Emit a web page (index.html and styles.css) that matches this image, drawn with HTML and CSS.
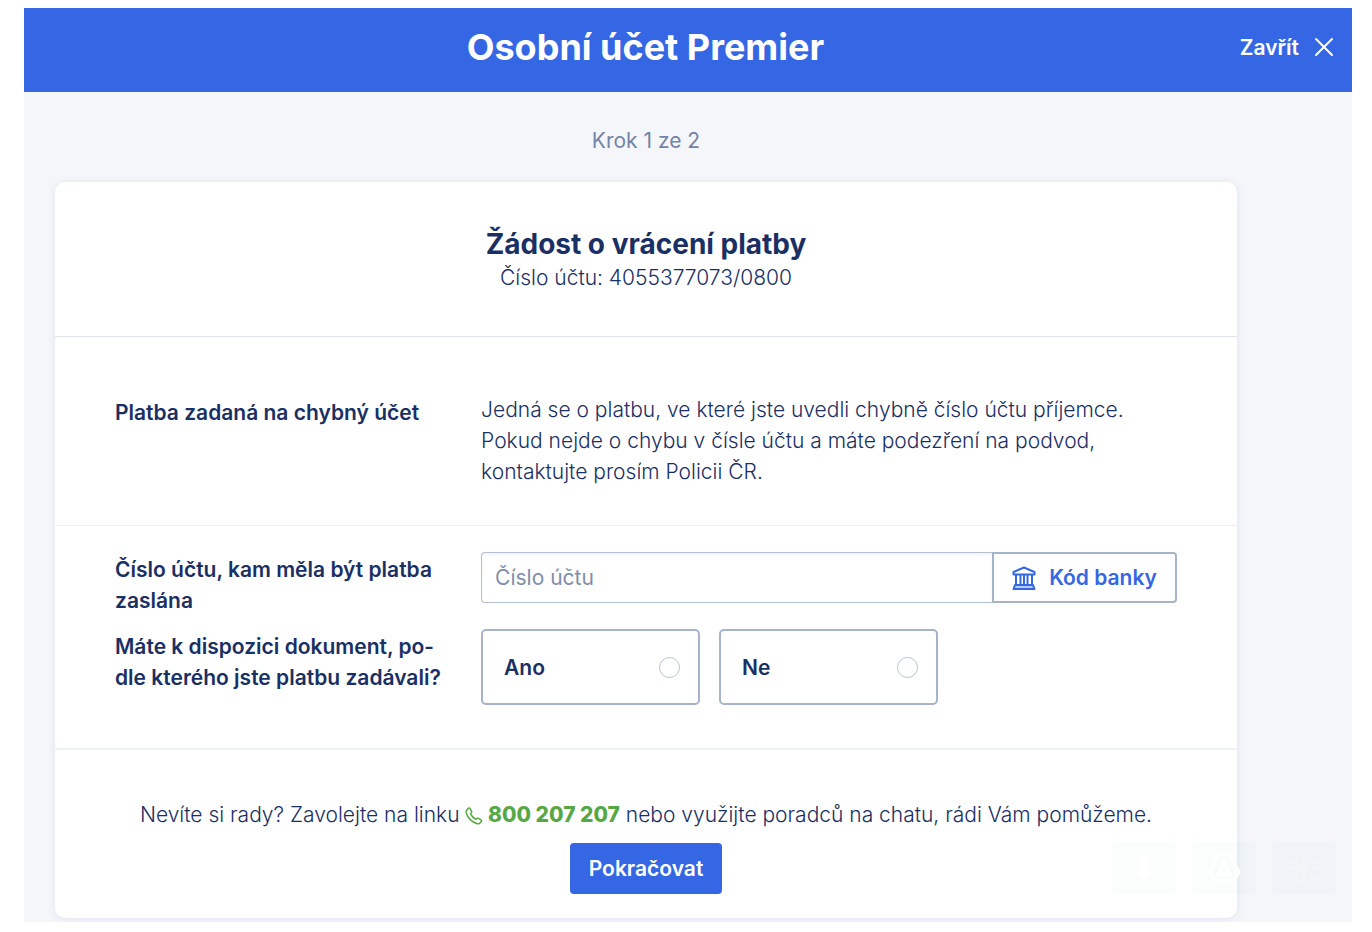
FILE: index.html
```html
<!DOCTYPE html>
<html lang="cs">
<head>
    <meta charset="utf-8">
    <title>Osobní účet Premier</title>
    <link rel="stylesheet" href="styles.css">
</head>
<body>
    <div class="page">
        <header class="header">
            <h1>Osobní účet Premier</h1>
            <button type="button" class="close">
                Zavřít
                <svg width="20" height="20" viewBox="0 0 20 20" fill="none" stroke="currentColor" stroke-width="2" stroke-linecap="round"><path d="M2 2l16 16M18 2L2 18"/></svg>
            </button>
        </header>
        <main class="content">
            <p class="step">Krok 1 ze 2</p>
            <form class="card">
                <div class="card-head">
                    <h2>Žádost o vrácení platby</h2>
                    <p>Číslo účtu: 4055377073/0800</p>
                </div>
                <div class="row intro">
                    <h3 class="label">Platba zadaná na chybný účet</h3>
                    <p>Jedná se o platbu, ve které jste uvedli chybně číslo účtu příjemce. Pokud nejde o chybu v čísle účtu a máte podezření na podvod, kontaktujte prosím Policii ČR.</p>
                </div>
                <div class="fields">
                    <div class="row">
                        <label class="label" for="ucet">Číslo účtu, kam měla být platba zaslána</label>
                        <div class="account">
                            <input type="text" id="ucet" name="ucet" placeholder="Číslo účtu">
                            <button type="button" class="bank">
                                <svg width="24" height="24" viewBox="0 0 24 24" fill="none" stroke="currentColor" stroke-width="2" stroke-linejoin="round"><path d="M1.500 8.500V6L12 1.500 22.500 6v2.500zM4 9v10M8.500 9v10M12 9v10M15.500 9v10M20 9v10"/><path d="M3 19h18l1.500 4h-21z" fill="currentColor" fill-opacity=".35"/></svg>
                                Kód banky
                            </button>
                        </div>
                    </div>
                    <div class="row" role="radiogroup" aria-labelledby="dokument">
                        <span class="label" id="dokument">Máte k dispozici dokument, po&shy;dle kterého jste platbu zadávali?</span>
                        <div class="options">
                            <label class="option" for="ano">Ano <input type="radio" id="ano" name="dokument" value="ano"></label>
                            <label class="option" for="ne">Ne <input type="radio" id="ne" name="dokument" value="ne"></label>
                        </div>
                    </div>
                </div>
                <div class="card-foot">
                    <p>Nevíte si rady? Zavolejte na linku <a class="phone" href="tel:800207207"><svg width="18" height="18" viewBox="0 0 18 18" fill="none" stroke="currentColor" stroke-width="1.500" stroke-linejoin="round"><path d="M1.500 3.500L3 1.500c.6-.7 1.500-.6 2 .1l1.500 2.400c.4.700.3 1.200-.2 1.700l-.8.900c1 2.300 3 4.500 5.400 5.700l1-.9c.5-.5 1-.5 1.600-.1l2.400 1.500c.8.500.9 1.300.3 1.900l-1.500 1.500c-.6.600-1.400.8-2.400.5C6.800 15 2.600 10.500 1.200 5.700c-.2-.9-.1-1.600.3-2.200z"/></svg> 800 207 207</a> nebo využijte poradců na chatu, rádi Vám pomůžeme.</p>
                    <button type="submit" class="submit">Pokračovat</button>
                </div>
            </form>
        </main>
        <div class="tools">
            <button type="button" aria-label="Stáhnout">
                <svg width="36" height="36" viewBox="0 0 36 36" fill="currentColor"><path d="M13 6h10v13h6L18 30 7 19h6z"/></svg>
            </button>
            <button type="button" aria-label="Disk">
                <svg width="36" height="36" viewBox="0 0 36 36" fill="none" stroke="currentColor" stroke-width="3" stroke-linejoin="round"><path d="M13 4h10l10 18-5 9H8l-5-9zM18 13l-6 11h12z"/></svg>
            </button>
            <button type="button" class="photos" aria-label="Fotky">
                <svg width="36" height="36" viewBox="0 0 36 36" fill="none" stroke="currentColor" stroke-width="3" stroke-linejoin="round"><path d="M18 18V2c-9 0-9 11 0 16M18 18H2c0-9 11-9 16 0M18 18v15c-9 0-9-11 0-15M18 18h16c0-9-11-9-16 0M29 22v12M23 28h12"/></svg>
            </button>
        </div>
    </div>
</body>
</html>
```
FILE: styles.css
```css
* {
    box-sizing: border-box;
}

body {
    margin: 8px 20px 10px 24px;
    font-family: Inter, "Liberation Sans", sans-serif;
    font-size: 21px;
    line-height: 31px;
    color: #1a2f63;
    background-color: #fff;
}

h1, h2, h3, p {
    margin: 0;
}

button, input {
    font: inherit;
}

button {
    cursor: pointer;
}

.page {
    position: relative;
    background-color: #f4f6fa;
    padding-bottom: 4px;
    overflow: hidden;
}

.header {
    display: flex;
    align-items: center;
    min-height: 84px;
    padding: 0 18px 6px 27px;
    background-color: #3567e4;
    color: #fff;
}

.header h1 {
    flex: 1;
    font-size: 36px;
    line-height: 44px;
    font-weight: 700;
    text-align: center;
}

.close {
    display: flex;
    align-items: center;
    gap: 15px;
    padding: 0;
    border: none;
    background: none;
    color: #fff;
    font-weight: 600;
}

.content {
    padding: 33px 115px 0 31px;
}

.step {
    margin-bottom: 26px;
    text-align: center;
    color: #7384a7;
}

.card {
    background-color: #fff;
    border-radius: 10px;
    box-shadow: 0 1px 8px rgba(40, 70, 120, 0.1);
}

.card p {
    font-weight: 300;
}

.card-head {
    padding: 44px 60px 43px;
    border-bottom: 1px solid #dfe4ed;
    text-align: center;
}

.card-head h2 {
    font-size: 28px;
    line-height: 36px;
    font-weight: 700;
}

.row {
    display: grid;
    grid-template-columns: 34% 1fr;
    gap: 5px;
}

.label {
    padding-right: 24px;
    font-size: 21px;
    font-weight: 600;
}

.intro {
    padding: 57px 60px 38px;
    border-bottom: 1px solid #eceef1;
}

.intro .label {
    padding-top: 3px;
}

.fields {
    display: grid;
    gap: 15px;
    padding: 28px 60px 43px;
    border-bottom: 2px solid #eff3f8;
}

.account {
    display: flex;
    align-items: flex-start;
    margin-top: -2px;
}

.account input {
    flex: 1;
    min-width: 0;
    height: 51px;
    padding: 0 13px;
    border: 1px solid #b4bfd0;
    border-right: none;
    border-radius: 4px 0 0 4px;
    box-shadow: inset 0 2px 2px #f1f4f8;
    color: #1a2f63;
}

.account input::placeholder {
    color: #7f8dab;
    opacity: 1;
}

.bank {
    display: flex;
    align-items: center;
    justify-content: center;
    gap: 13px;
    width: 185px;
    height: 51px;
    padding: 0;
    border: 2px solid #a6b3c8;
    border-radius: 0 4px 4px 0;
    background-color: #fff;
    color: #3567e4;
    font-weight: 600;
}

.options {
    display: flex;
    gap: 19px;
    margin-top: -2px;
}

.option {
    display: flex;
    align-items: center;
    justify-content: space-between;
    width: 219px;
    height: 76px;
    padding: 0 18px 0 21px;
    border: 2px solid #a6b3c8;
    border-radius: 5px;
    font-weight: 600;
    cursor: pointer;
}

.option input {
    appearance: none;
    width: 21px;
    height: 21px;
    margin: 0;
    border: 1px solid #b9c2d2;
    border-radius: 50%;
}

.option input:checked {
    border: 6px solid #3567e4;
}

.card-foot {
    padding: 49px 60px 24px;
    text-align: center;
}

.phone {
    color: #57a845;
    font-weight: 800;
    text-decoration: none;
}

.phone svg {
    vertical-align: -3px;
}

.submit {
    height: 51px;
    margin-top: 13px;
    padding: 0 19px;
    border: none;
    border-radius: 4px;
    background-color: #3567e4;
    color: #fff;
    font-weight: 600;
    vertical-align: top;
}

/* Plovoucí lišta přes pravý dolní roh */
.tools {
    position: absolute;
    right: 16px;
    bottom: 28px;
    display: flex;
    gap: 16px;
}

.tools button {
    display: flex;
    align-items: center;
    justify-content: center;
    width: 64px;
    height: 52px;
    padding: 0;
    border: none;
    border-radius: 5px;
    background-color: rgba(150, 210, 210, 0.04);
    color: #fff;
}

.tools .photos {
    color: rgba(255, 255, 255, 0.2);
}
```
